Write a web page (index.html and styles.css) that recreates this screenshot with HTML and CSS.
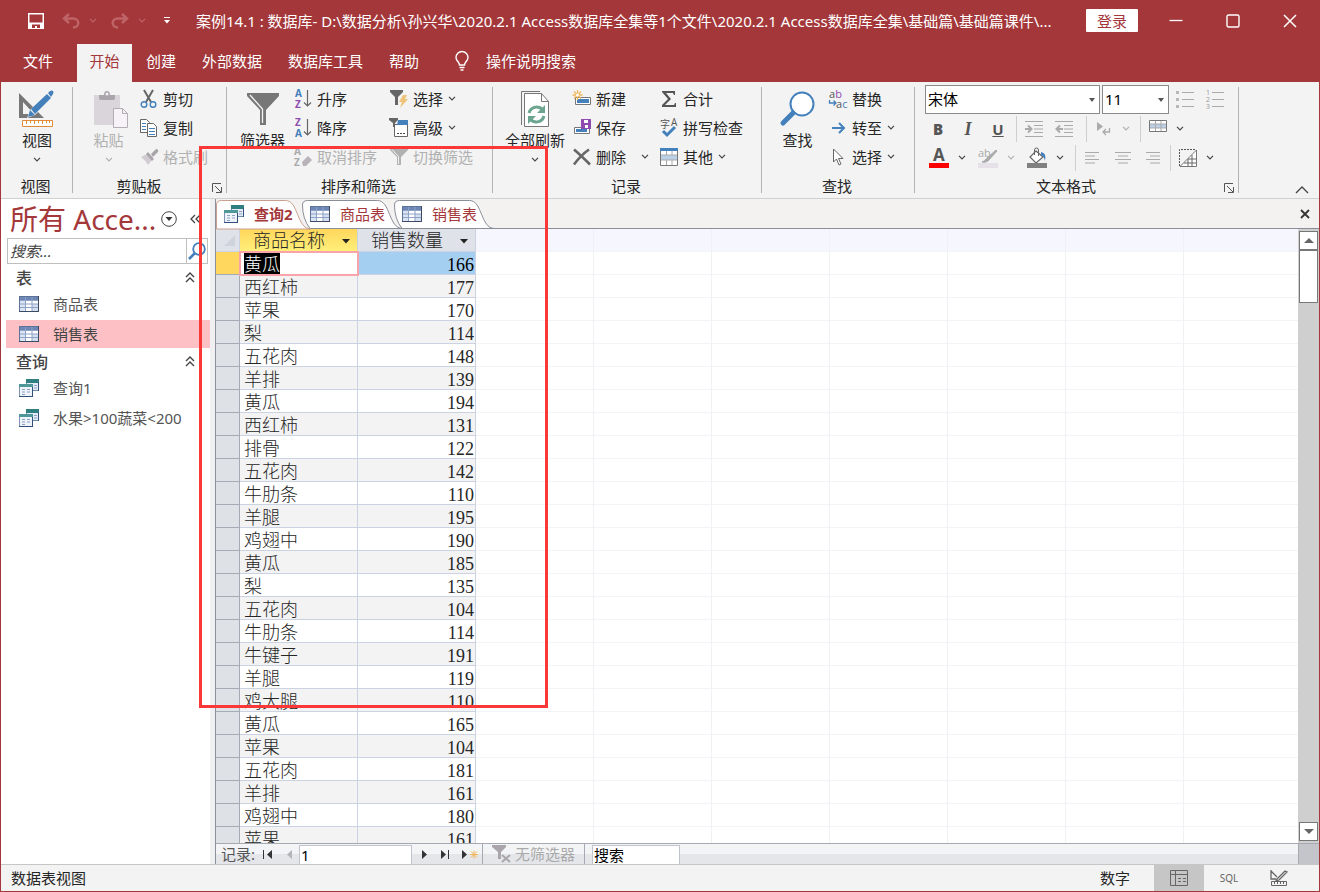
FILE: index.html
```html
<!DOCTYPE html>
<html lang="zh-CN">
<head>
    <meta charset="UTF-8">
    <meta name="viewport" content="width=device-width, initial-scale=1.0">
    <title>案例14.1 : 数据库</title>
    <link rel="stylesheet" href="styles.css">
</head>
<body>
    <!-- 共用图标 -->
    <svg class="defs" aria-hidden="true">
        <symbol id="i-down" viewBox="0 0 8 5"><path d="M1 .8l3 3 3-3" fill="none" stroke="currentColor" stroke-width="1.2"/></symbol>
        <symbol id="i-table" viewBox="0 0 20 16">
            <rect x=".5" y=".5" width="19" height="15" fill="#fff" stroke="#5c7299"/>
            <path d="M1 1h18v3H1z" fill="#6d86b5"/>
            <path d="M1 4h5v11H1z" fill="#dbe4f4"/>
            <path d="M13 8h6v7h-6z" fill="#d3def0"/>
            <path d="M6.500 1v14M13 1v14M1 4.500h18M1 8h18M1 11.500h18" stroke="#8ea2c6" fill="none"/>
            <path d="M0 15.500h20M19.500 0v16" stroke="#3d4a63"/>
        </symbol>
        <symbol id="i-query" viewBox="0 0 20 18">
            <rect x="7.500" y=".5" width="12" height="11" fill="#e3ecf6" stroke="#6f8fa6"/>
            <path d="M7 0h13v4H7z" fill="#2f7f80"/>
            <path d="M10 6.500h3M15 6.500h3M15 9h3" stroke="#8ea2c6"/>
            <rect x=".5" y="5.500" width="13" height="12" fill="#eef3fa" stroke="#7f95b5"/>
            <path d="M0 5h14v3H0z" fill="#4f9798"/>
            <path d="M3 10.500h3M8 10.500h3M3 13h3M8 13h3M3 15.500h3" stroke="#8ea2c6"/>
            <path d="M0 17.500h14M13.500 8v10M19.500 3v9" stroke="#33507c"/>
        </symbol>
        <symbol id="i-launch" viewBox="0 0 10 10"><path d="M.5 9V.5H9M3 3l6 6M9.500 4v5.500H4" fill="none" stroke="#555"/></symbol>
        <symbol id="i-up2" viewBox="0 0 10 11"><path d="M1 5l4-4 4 4M1 10l4-4 4 4" fill="none" stroke="#444" stroke-width="1.400"/></symbol>
        <symbol id="i-funnel" viewBox="0 0 18 17"><path d="M0 0h18v2l-7 7v8H7V9L0 2z" fill="currentColor"/><path d="M2 1.500l6.500 7V16" stroke="#f3f3f3" fill="none"/></symbol>
    </svg>

    <div class="window">
        <header class="titlebar">
            <div class="quick">
                <button aria-label="保存"><svg width="16" height="16" viewBox="0 0 16 16"><path d="M0 0h16v16H0z" fill="#fff"/><path d="M1.500 1.500h13v8h-13zM4 11.500h8v3.500H9v-2H7v2H4z" fill="#a4373a"/></svg></button>
                <button class="dim" aria-label="撤消"><svg width="18" height="16" viewBox="0 0 18 16"><path d="M7 1L2 5.500 7 10M2 5.500h9c7 0 7 9 0 9" fill="none" stroke="currentColor" stroke-width="2.500"/></svg><svg width="8" height="5"><use href="#i-down"/></svg></button>
                <button class="dim" aria-label="恢复"><svg width="18" height="16" viewBox="0 0 18 16"><path d="M11 1l5 4.500-5 4.500M16 5.500H7c-7 0-7 9 0 9" fill="none" stroke="currentColor" stroke-width="2.500"/></svg><svg width="8" height="5"><use href="#i-down"/></svg></button>
                <button class="custom" aria-label="自定义"><svg width="6" height="7" viewBox="0 0 6 7"><path d="M0 .5h6" stroke="#fff"/><path d="M0 3h6L3 6.500z" fill="#fff"/></svg></button>
            </div>
            <div class="title">案例14.1 : 数据库- D:\数据分析\孙兴华\2020.2.1 Access数据库全集等1个文件\2020.2.1 Access数据库全集\基础篇\基础篇课件\...</div>
            <button class="signin">登录</button>
            <div class="winbtns">
                <button aria-label="最小化"><svg width="14" height="14" viewBox="0 0 14 14"><path d="M.5 6.500h13" stroke="#fff" stroke-width="1.300"/></svg></button>
                <button aria-label="最大化"><svg width="14" height="14" viewBox="0 0 14 14"><rect x="1" y="1" width="12" height="12" rx="1.500" fill="none" stroke="#fff" stroke-width="1.400"/></svg></button>
                <button aria-label="关闭"><svg width="14" height="14" viewBox="0 0 14 14"><path d="M1 1l12 12M13 1L1 13" stroke="#fff" stroke-width="1.500"/></svg></button>
            </div>
        </header>

        <nav class="menu">
            <button class="file">文件</button>
            <button class="on">开始</button>
            <button>创建</button>
            <button>外部数据</button>
            <button>数据库工具</button>
            <button>帮助</button>
            <button class="tell"><svg width="14" height="20" viewBox="0 0 14 20"><path d="M4.500 14c0-3-3.500-4-3.500-7.500a6 6 0 0 1 12 0C13 10 9.500 11 9.500 14zM4.500 16.500h5M5.500 19h3" fill="none" stroke="#fff" stroke-width="1.400"/></svg>操作说明搜索</button>
        </nav>

        <div class="ribbon">
            <section class="group g-view">
                <div class="group-body">
                    <button class="big">
                        <svg width="38" height="38" viewBox="0 0 38 38">
                            <path d="M1 3v25h25zM5 12l11 12H5z" fill="#777" fill-rule="evenodd"/>
                            <path d="M9 28l3-8 17-17 5 5-17 17z" fill="#f3f3f3"/>
                            <path d="M10 27l2-7 5 5zM13 19L29 4l4 4-16 16zM30 3l2-2q2-1 3 0t0 3l-2 3z" fill="#4380bc"/>
                            <path d="M4.500 30.500h30v6h-30z" fill="#fff" stroke="#e08a3c"/>
                            <path d="M8.500 31v3M12.500 31v2M16.500 31v3M20.500 31v2M24.500 31v3M28.500 31v2M31.500 31v2" stroke="#e08a3c"/>
                        </svg>
                        <span>视图</span>
                        <svg class="chev" width="8" height="5"><use href="#i-down"/></svg>
                    </button>
                </div>
                <div class="group-name">视图</div>
            </section>

            <section class="group g-clip">
                <div class="group-body">
                    <button class="big off">
                        <svg width="32" height="38" viewBox="0 0 32 38">
                            <path d="M1 5h26v30H1z" fill="#dad5da"/>
                            <path d="M6 8V5h5q0-4 3-4t3 4h5v3q0 2-2 2H8q-2 0-2-2z" fill="#aaa5aa"/>
                            <circle cx="14" cy="4" r="1.500" fill="#f3f3f3"/>
                            <path d="M20.500 18.500h9l5 5v14h-14z" fill="#f6f2f6" stroke="#b2adb2"/>
                            <path d="M29.500 18.500v5h5" fill="none" stroke="#b2adb2"/>
                        </svg>
                        <span>粘贴</span>
                        <svg class="chev" width="8" height="5"><use href="#i-down"/></svg>
                    </button>
                    <div class="cmds">
                        <button class="cmd"><svg width="18" height="18" viewBox="0 0 18 18"><path d="M4 0l7 12M13 0L6 12" stroke="#666" stroke-width="2"/><g fill="none" stroke="#4380bc" stroke-width="1.400"><circle cx="4" cy="14.500" r="2.800"/><circle cx="13" cy="14.500" r="2.800"/></g></svg>剪切</button>
                        <button class="cmd"><svg width="18" height="18" viewBox="0 0 18 18"><g fill="#fff" stroke="#666"><path d="M.5.500h6l3 3v10h-9z"/><path d="M7.500 4.500h6l3 3v10h-9z"/></g><path d="M2 4.500h4M2 7.500h4M2 10.500h4M9 9.500h6M9 12.500h6M9 15.500h6" stroke="#4380bc"/></svg>复制</button>
                        <button class="cmd off"><svg width="18" height="18" viewBox="0 0 18 18"><path d="M1 9l6-3 5 6-4 5q-3-5-7-8z" fill="#d2ccd2"/><path d="M8 4l6 7-2 2-6-7zM11 6l4-4q2-2 3 0t-1 3l-4 4z" fill="#aaa5aa"/></svg>格式刷</button>
                    </div>
                </div>
                <div class="group-name launch">剪贴板<button aria-label="剪贴板选项"><svg width="10" height="10"><use href="#i-launch"/></svg></button></div>
            </section>

            <section class="group g-sort">
                <div class="group-body">
                    <button class="big">
                        <svg width="34" height="38" viewBox="0 0 34 38"><path d="M1 3h32v3L20 20v15h-6V20L1 6z" fill="#777"/><path d="M4 5l12.500 14v14" fill="none" stroke="#f3f3f3" stroke-width="1.300"/></svg>
                        <span>筛选器</span>
                    </button>
                    <div class="cmds sort-cmds">
                        <button class="cmd"><svg class="az" width="18" height="20" viewBox="0 0 18 20"><text x="1" y="8" fill="#4380bc">A</text><text x="1" y="19" fill="#8e4bb0">Z</text><path d="M13.500 1v16M10 13.500l3.500 3.500 3.500-3.500" fill="none" stroke="#666" stroke-width="1.200"/></svg>升序</button>
                        <button class="cmd"><svg class="az" width="18" height="20" viewBox="0 0 18 20"><text x="1" y="8" fill="#8e4bb0">Z</text><text x="1" y="19" fill="#4380bc">A</text><path d="M13.500 1v16M10 13.500l3.500 3.500 3.500-3.500" fill="none" stroke="#666" stroke-width="1.200"/></svg>降序</button>
                        <button class="cmd off"><svg class="az" width="18" height="20" viewBox="0 0 18 20"><text x="0" y="8" fill="#aaa">A</text><text x="0" y="19" fill="#aaa">Z</text><path d="M8 15l6-6 4 4-6 6H9z" fill="#b8b3b8"/></svg>取消排序</button>
                    </div>
                    <div class="cmds">
                        <button class="cmd"><svg width="18" height="18" viewBox="0 0 18 18"><path d="M0 0h13v2L8 7v8H5V7L0 2z" fill="#666"/><path d="M13 5h4l-2 4h3l-8 9 2-6H9z" fill="#efc37a"/></svg>选择<svg class="chev" width="8" height="5"><use href="#i-down"/></svg></button>
                        <button class="cmd"><svg width="18" height="18" viewBox="0 0 18 18"><path d="M4.500 5.500h13v12h-13z" fill="#fff" stroke="#666"/><path d="M8 1h10v5H7z" fill="#4380bc"/><path d="M-1-1h9v2L5 4v4H3V4L-1 1z" fill="#666"/><path d="M7 14h2v1H7zM10 14h2v1h-2zM13 14h2v1h-2z" fill="#444"/></svg>高级<svg class="chev" width="8" height="5"><use href="#i-down"/></svg></button>
                        <button class="cmd off"><svg width="18" height="17"><use href="#i-funnel"/></svg>切换筛选</button>
                    </div>
                </div>
                <div class="group-name">排序和筛选</div>
            </section>

            <section class="group g-records">
                <div class="group-body">
                    <button class="big">
                        <svg width="30" height="38" viewBox="0 0 30 38">
                            <path d="M1.500 35V1.500H20" fill="none" stroke="#777"/>
                            <path d="M4.500 3.500h17l7 8v25h-24z" fill="#fff" stroke="#777"/>
                            <path d="M21.500 3.500v8h7" fill="none" stroke="#777"/>
                            <path d="M9 23a8 8 0 0 1 13-4M24 26a8 8 0 0 1-13 4" fill="none" stroke="#6ba58f" stroke-width="3"/>
                            <path d="M25 15v8h-8zM8 34v-8h8z" fill="#6ba58f"/>
                        </svg>
                        <span>全部刷新</span>
                        <svg class="chev" width="8" height="5"><use href="#i-down"/></svg>
                    </button>
                    <div class="cmds record-cmds">
                        <button class="cmd"><svg width="18" height="18" viewBox="0 0 18 18"><path d="M2.500 7.500h15v7h-15z" fill="#fff" stroke="#777"/><path d="M4 9h12v4H4z" fill="#4380bc"/><path d="M4.500 0v10M-.5 5h10M1 1.500l7 7M8 1.500l-7 7" stroke="#efb65c" stroke-width="1.300"/><circle cx="4.500" cy="5" r="1.500" fill="#fff"/></svg>新建</button>
                        <button class="cmd"><svg width="18" height="18" viewBox="0 0 18 18"><path d="M1.500 8.500h15v6h-15z" fill="#fff" stroke="#777"/><path d="M3 10h11v3H3z" fill="#4380bc"/><path d="M8 0h10v10H8z" fill="#8e4bb0"/><path d="M11 1h4v3h-4zM12 6h3v3h-3z" fill="#fff"/></svg>保存</button>
                        <button class="cmd"><svg width="18" height="18" viewBox="0 0 18 18"><path d="M1 1.500q6 5 16 15M16 1.500Q8 7 1 16.500" fill="none" stroke="#666" stroke-width="2.600"/></svg>删除<svg class="chev push" width="8" height="5"><use href="#i-down"/></svg></button>
                    </div>
                    <div class="cmds">
                        <button class="cmd"><svg width="18" height="18" viewBox="0 0 18 18"><path d="M2 1h13v4h-1l-1-2H6l5 6-6 6h9l1-2h1v4H2v-2l6-6-6-7z" fill="#555"/></svg>合计</button>
                        <button class="cmd"><svg class="spell" width="18" height="20" viewBox="0 0 18 20"><text x="0" y="10" fill="#555">字</text><text x="11" y="8" fill="#555">A</text><path d="M3 13l4 4 8-8" fill="none" stroke="#4380bc" stroke-width="3"/></svg>拼写检查</button>
                        <button class="cmd"><svg width="18" height="18" viewBox="0 0 18 18"><path d="M.5 1.500h17v16H.5z" fill="#fff" stroke="#777"/><path d="M0 0h18v3H0z" fill="#4380bc"/><path d="M1 7h16v5H1z" fill="#bcd0e8"/><path d="M6.500 3v4M12 3v4M6.500 12v5M12 12v5M1 7h16M1 12h16" stroke="#aaa"/></svg>其他<svg class="chev" width="8" height="5"><use href="#i-down"/></svg></button>
                    </div>
                </div>
                <div class="group-name">记录</div>
            </section>

            <section class="group g-find">
                <div class="group-body">
                    <button class="big">
                        <svg width="36" height="38" viewBox="0 0 36 38"><circle cx="22" cy="14" r="11.500" fill="#fff" stroke="#4380bc" stroke-width="2"/><path d="M13 23L3 33" stroke="#4380bc" stroke-width="5" stroke-linecap="round"/></svg>
                        <span>查找</span>
                    </button>
                    <div class="cmds">
                        <button class="cmd"><svg class="abac" width="18" height="20" viewBox="0 0 18 20"><text x="0" y="9" fill="#555">a<tspan fill="#8e4bb0">b</tspan></text><text x="7" y="19" fill="#555">a<tspan fill="#4380bc">c</tspan></text><path d="M.5 11v3h6M4.500 11.500L7 14l-2.500 2.500" fill="none" stroke="#4380bc" stroke-width="1.300"/></svg>替换</button>
                        <button class="cmd"><svg width="18" height="14" viewBox="0 0 18 14"><path d="M3 7h12M10 2l5 5-5 5" fill="none" stroke="#4380bc" stroke-width="2"/></svg>转至<svg class="chev" width="8" height="5"><use href="#i-down"/></svg></button>
                        <button class="cmd"><svg width="18" height="18" viewBox="0 0 18 18"><path d="M4.500 1v13l3-3 2.500 6 2-1-2.500-5.500H14z" fill="#fff" stroke="#666"/></svg>选择<svg class="chev" width="8" height="5"><use href="#i-down"/></svg></button>
                    </div>
                </div>
                <div class="group-name">查找</div>
            </section>

            <section class="group g-text">
                <div class="group-body text-body">
                    <div class="fmt">
                        <label class="combo font"><select aria-label="字体"><option>宋体</option></select></label>
                        <label class="combo size"><select aria-label="字号"><option>11</option></select></label>
                        <button aria-label="项目符号"><svg width="18" height="18" viewBox="0 0 18 18"><path d="M6 1.500h12M6 8.500h12M6 15.500h12" stroke="#aaa"/><path d="M0 0h3v3H0zM0 7h3v3H0zM0 14h3v3H0z" fill="#b8b8b8"/></svg></button>
                        <button class="numbers" aria-label="编号"><svg width="18" height="20" viewBox="0 0 18 20"><path d="M6 2.500h12M6 9.500h12M6 16.500h12" stroke="#aaa"/><text x="0" y="5">1</text><text x="0" y="12">2</text><text x="0" y="19">3</text></svg></button>
                    </div>
                    <div class="fmt row2">
                        <button class="letter"><b>B</b></button>
                        <button class="letter"><i>I</i></button>
                        <button class="letter"><u>U</u></button>
                        <span class="bar"></span>
                        <button aria-label="增加缩进"><svg width="18" height="16" viewBox="0 0 18 16"><path d="M0 .5h18M9 4.500h9M9 8h9M9 11.500h9M0 15.500h18" stroke="#aaa"/><path d="M0 8h6M3 4.500L6.500 8 3 11.500" fill="none" stroke="#aaa" stroke-width="2"/></svg></button>
                        <button aria-label="减少缩进"><svg width="18" height="16" viewBox="0 0 18 16"><path d="M0 .5h18M9 4.500h9M9 8h9M9 11.500h9M0 15.500h18" stroke="#aaa"/><path d="M1 8h7M5 4.500L1.500 8 5 11.500" fill="none" stroke="#aaa" stroke-width="2"/></svg></button>
                        <span class="bar"></span>
                        <button class="drop off" aria-label="文字方向"><svg width="18" height="14" viewBox="0 0 18 14"><path d="M2 0l6 4.500L2 9z" fill="#aaa"/><path d="M14.500 6v4H8M11 7l-3 3 3 3" fill="none" stroke="#aaa" stroke-width="1.300"/></svg><svg class="chev" width="8" height="5"><use href="#i-down"/></svg></button>
                        <span class="bar"></span>
                        <button class="drop" aria-label="网格线"><svg width="18" height="18" viewBox="0 0 18 18"><path d="M.5.500h17v11H.5z" fill="#fff" stroke="#777"/><path d="M1 4h16v4H1z" fill="#bcd0e8"/><path d="M6.500 1v10M12 1v10M1 4h16M1 8h16" stroke="#aaa"/></svg><svg class="chev" width="8" height="5"><use href="#i-down"/></svg></button>
                    </div>
                    <div class="fmt row3">
                        <button class="drop" aria-label="字体颜色"><svg class="fontcolor" width="20" height="20" viewBox="0 0 20 20"><text x="4" y="13">A</text><path d="M0 15h20v5H0z" fill="red"/></svg><svg class="chev" width="8" height="5"><use href="#i-down"/></svg></button>
                        <button class="drop off" aria-label="突出显示"><svg class="abac" width="20" height="20" viewBox="0 0 20 20"><text x="0" y="9" fill="#aaa">ab</text><path d="M0 15h20v5H0z" fill="#e6e1e8"/><path d="M18 2l1 1-9 10q-3 2-6 1 3-1 4-3z" fill="#aaa" stroke="#aaa"/></svg><svg class="chev" width="8" height="5"><use href="#i-down"/></svg></button>
                        <button class="drop" aria-label="背景色"><svg width="20" height="20" viewBox="0 0 20 20"><path d="M9 3l7 6-7 6-6-6z" fill="#fff" stroke="#666" stroke-width="1.200"/><path d="M7.500 7V2q0-2 2-2t2 2v6" fill="none" stroke="#666"/><path d="M14 4q6 1 4 9-1-5-4-6z" fill="#4380bc"/><path d="M0 15h20v5H0z" fill="#808080"/></svg><svg class="chev" width="8" height="5"><use href="#i-down"/></svg></button>
                        <span class="bar"></span>
                        <button aria-label="左对齐"><svg width="18" height="12" viewBox="0 0 18 12"><path d="M1 .5h14M1 4h10M1 7.500h14M1 11h10" stroke="#aaa"/></svg></button>
                        <button aria-label="居中"><svg width="18" height="12" viewBox="0 0 18 12"><path d="M1 .5h16M4 4h10M1 7.500h16M4 11h10" stroke="#aaa"/></svg></button>
                        <button class="right" aria-label="右对齐"><svg width="18" height="12" viewBox="0 0 18 12"><path d="M2 .5h14M6 4h10M2 7.500h14M6 11h10" stroke="#aaa"/></svg></button>
                        <span class="bar"></span>
                        <button class="drop" aria-label="可选行颜色"><svg width="18" height="18" viewBox="0 0 18 18"><path d="M.5 17V.5H17" fill="none" stroke="#555" stroke-dasharray="2 1"/><path d="M17.500 1v16.500H1z" fill="#fff" stroke="#777"/><path d="M13 6v11M9 10v7M5 14h12M9 10h8" fill="none" stroke="#666"/></svg><svg class="chev" width="8" height="5"><use href="#i-down"/></svg></button>
                    </div>
                </div>
                <div class="group-name launch">文本格式<button aria-label="文本格式选项"><svg width="10" height="10"><use href="#i-launch"/></svg></button></div>
            </section>
            <button class="collapse" aria-label="折叠功能区"><svg width="14" height="8" viewBox="0 0 14 8"><path d="M1 7l6-6 6 6" fill="none" stroke="#444" stroke-width="1.300"/></svg></button>
        </div>

        <div class="main">
            <aside class="nav">
                <div class="nav-head">
                    <h1>所有 Acce...</h1>
                    <button aria-label="筛选对象"><svg width="16" height="16" viewBox="0 0 16 16"><circle cx="8" cy="8" r="7.300" fill="none" stroke="#444"/><path d="M4.500 6h7L8 10z" fill="#333"/></svg></button>
                    <button class="fold" aria-label="收起"><svg width="11" height="10" viewBox="0 0 11 10"><path d="M5 1L1 5l4 4M10 1L6 5l4 4" fill="none" stroke="#444" stroke-width="1.300"/></svg></button>
                </div>
                <div class="nav-search">
                    <input type="text" placeholder="搜索..." aria-label="搜索对象">
                    <button aria-label="搜索"><svg width="18" height="18" viewBox="0 0 18 18"><circle cx="11" cy="7" r="5.800" fill="#fff" stroke="#4380bc" stroke-width="1.800"/><path d="M7 11l-6 6" stroke="#4380bc" stroke-width="2.600"/></svg></button>
                </div>
                <h2>表<svg width="10" height="11"><use href="#i-up2"/></svg></h2>
                <a href="#"><svg width="20" height="16"><use href="#i-table"/></svg>商品表</a>
                <a href="#" class="sel"><svg width="20" height="16"><use href="#i-table"/></svg>销售表</a>
                <h2>查询<svg width="10" height="11"><use href="#i-up2"/></svg></h2>
                <a href="#"><svg width="20" height="18"><use href="#i-query"/></svg>查询1</a>
                <a href="#"><svg width="20" height="18"><use href="#i-query"/></svg>水果&gt;100蔬菜&lt;200</a>
            </aside>

            <div class="doc">
                <div class="doctabs">
                    <button class="doctab t1">
                        <svg class="shape" width="98" height="30" viewBox="0 0 98 30"><path d="M.5 30V6q0-4.500 5-4.500h64c13 0 11 28 25 28.500z"/></svg>
                        <svg width="20" height="18"><use href="#i-query"/></svg><span>查询2</span>
                    </button>
                    <button class="doctab t2">
                        <svg class="shape" width="101" height="30" viewBox="0 0 101 30"><path d="M8 29.500Q.5 20 .5 6q0-4.500 5-4.500h70c13 0 11 28 25 28z"/></svg>
                        <svg width="20" height="18"><use href="#i-table"/></svg><span>商品表</span>
                    </button>
                    <button class="doctab t3">
                        <svg class="shape" width="101" height="30" viewBox="0 0 101 30"><path d="M8 29.500Q.5 20 .5 6q0-4.500 5-4.500h70c13 0 11 28 25 28z"/></svg>
                        <svg width="20" height="18"><use href="#i-table"/></svg><span>销售表</span>
                    </button>
                    <button class="docclose" aria-label="关闭"><svg width="10" height="10" viewBox="0 0 10 10"><path d="M1 1l8 8M9 1L1 9" stroke="#333" stroke-width="1.800"/></svg></button>
                </div>

                <div class="sheet">
                    <div class="cells">
                        <table>
                            <thead>
                                <tr>
                                    <th class="pick"><svg width="11" height="11" viewBox="0 0 11 11"><path d="M11 0v11H0z" fill="#cfd3dc"/></svg></th>
                                    <th class="hot"><div>商品名称<svg width="8" height="5" viewBox="0 0 8 5"><path d="M0 0h8L4 4.500z" fill="#222"/></svg></div></th>
                                    <th><div>销售数量<svg width="8" height="5" viewBox="0 0 8 5"><path d="M0 0h8L4 4.500z" fill="#222"/></svg></div></th>
                                </tr>
                            </thead>
                            <tbody>
                                <tr class="current"><th></th><td><mark>黄瓜</mark></td><td>166</td></tr>
                                <tr><th></th><td>西红柿</td><td>177</td></tr>
                                <tr><th></th><td>苹果</td><td>170</td></tr>
                                <tr><th></th><td>梨</td><td>114</td></tr>
                                <tr><th></th><td>五花肉</td><td>148</td></tr>
                                <tr><th></th><td>羊排</td><td>139</td></tr>
                                <tr><th></th><td>黄瓜</td><td>194</td></tr>
                                <tr><th></th><td>西红柿</td><td>131</td></tr>
                                <tr><th></th><td>排骨</td><td>122</td></tr>
                                <tr><th></th><td>五花肉</td><td>142</td></tr>
                                <tr><th></th><td>牛肋条</td><td>110</td></tr>
                                <tr><th></th><td>羊腿</td><td>195</td></tr>
                                <tr><th></th><td>鸡翅中</td><td>190</td></tr>
                                <tr><th></th><td>黄瓜</td><td>185</td></tr>
                                <tr><th></th><td>梨</td><td>135</td></tr>
                                <tr><th></th><td>五花肉</td><td>104</td></tr>
                                <tr><th></th><td>牛肋条</td><td>114</td></tr>
                                <tr><th></th><td>牛键子</td><td>191</td></tr>
                                <tr><th></th><td>羊腿</td><td>119</td></tr>
                                <tr><th></th><td>鸡大腿</td><td>110</td></tr>
                                <tr><th></th><td>黄瓜</td><td>165</td></tr>
                                <tr><th></th><td>苹果</td><td>104</td></tr>
                                <tr><th></th><td>五花肉</td><td>181</td></tr>
                                <tr><th></th><td>羊排</td><td>161</td></tr>
                                <tr><th></th><td>鸡翅中</td><td>180</td></tr>
                                <tr><th></th><td>苹果</td><td>161</td></tr>
                            </tbody>
                        </table>
                    </div>
                    <div class="vscroll">
                        <button aria-label="向上"><svg width="10" height="5" viewBox="0 0 10 5"><path d="M0 5l5-5 5 5z" fill="#666"/></svg></button>
                        <div class="thumb"></div>
                        <button class="down" aria-label="向下"><svg width="10" height="5" viewBox="0 0 10 5"><path d="M0 0l5 5 5-5z" fill="#666"/></svg></button>
                    </div>
                </div>

                <div class="recnav">
                    <label for="recno">记录:</label>
                    <button aria-label="第一条"><svg width="10" height="9" viewBox="0 0 10 9"><path d="M.5 0v9" stroke="#333"/><path d="M9 0v9L4 4.500z" fill="#333"/></svg></button>
                    <button aria-label="上一条"><svg width="10" height="9" viewBox="0 0 10 9"><path d="M9 0v9L4 4.500z" fill="#b5b5b8"/></svg></button>
                    <input id="recno" type="text" value="1">
                    <button class="next" aria-label="下一条"><svg width="10" height="9" viewBox="0 0 10 9"><path d="M2 0v9l5-4.500z" fill="#333"/></svg></button>
                    <button aria-label="最后一条"><svg width="10" height="9" viewBox="0 0 10 9"><path d="M1 0v9l5-4.500z" fill="#333"/><path d="M8.500 0v9" stroke="#333"/></svg></button>
                    <button class="new" aria-label="新记录"><svg width="16" height="9" viewBox="0 0 16 9"><path d="M0 0v9l5-4.500z" fill="#333"/><path d="M12 .5v8M8 4.500h8M9 1.500l6 6M15 1.500l-6 6" stroke="#efb65c"/></svg></button>
                    <button class="nofilter"><svg width="20" height="18" viewBox="0 0 20 18"><path d="M0 0h14v2L9 7v7H6V7L0 2z" fill="#aaa5aa"/><path d="M10 10l8 7M18 10l-8 7" stroke="#aaa5aa" stroke-width="2"/></svg>无筛选器</button>
                    <input class="find" type="text" value="搜索" aria-label="搜索">
                    <div class="hscroll"></div>
                    <div class="corner"></div>
                </div>
            </div>
        </div>

        <footer class="status">
            <span class="mode">数据表视图</span>
            <span class="num">数字</span>
            <button class="on" aria-label="数据表视图"><svg width="18" height="16" viewBox="0 0 18 16"><path d="M.5.500h17v15H.5zM.5 4.500h17M5.500.500v15M8 8.500h3M13 8.500h3M8 11.500h3M13 11.500h3" fill="none" stroke="#666"/></svg></button>
            <button class="sql">SQL</button>
            <button aria-label="设计视图"><svg width="18" height="17" viewBox="0 0 18 17"><path d="M1 0v9h5M1 1l6 6M7 9l8-8 2 1-8 8-3 1z" fill="none" stroke="#666" stroke-width="1.300"/><path d="M1.500 11.500h15v4h-15zM4.500 12v2M7.500 12v2M10.500 12v2M13.500 12v2" fill="none" stroke="#666"/></svg></button>
        </footer>

        <!-- 红色标注框 -->
        <div class="callout"></div>
    </div>
</body>
</html>
```

FILE: styles.css
```css
* {
    box-sizing: border-box;
}
body {
    margin: 0;
    font-family: "Noto Sans", "Noto Sans CJK SC", sans-serif;
    font-size: 15px;
    line-height: 20px;
    color: #262626;
}
button {
    display: flex;
    align-items: center;
    margin: 0;
    padding: 0;
    border: 0;
    background: none;
    font: inherit;
    color: inherit;
    white-space: nowrap;
    flex-shrink: 0;
}
input,
select {
    font: inherit;
    color: #000;
    border-radius: 0;
}
svg {
    display: block;
    flex-shrink: 0;
    overflow: visible;
}
.defs {
    position: absolute;
    width: 0;
    height: 0;
}
.window {
    position: relative;
    display: flex;
    flex-direction: column;
    height: 100vh;
    border: 1px solid #a4373a;
    border-top: 0;
    background: #f3f3f3;
    overflow: hidden;
}

/* 标题栏 */
.titlebar {
    display: flex;
    align-items: center;
    height: 41px;
    flex-shrink: 0;
    background: #a4373a;
    color: #fff;
}
.quick {
    display: flex;
    width: 195px;
    padding-left: 27px;
    gap: 14px;
    flex-shrink: 0;
}
.quick button {
    gap: 9px;
}
.quick .dim {
    color: #be6467;
}
.quick .dim:nth-child(2) {
    margin-left: 4px;
}
.quick .custom {
    margin-left: 4px;
}
.title {
    flex: 1;
    min-width: 0;
    white-space: nowrap;
    overflow: hidden;
}
.signin {
    width: 52px;
    height: 23px;
    margin: 0 9px 0 16px;
    justify-content: center;
    background: #fff;
    color: #a4373a;
    border-radius: 1px;
}
.winbtns {
    display: flex;
    margin-right: 1px;
}
.winbtns button {
    width: 57px;
    height: 32px;
    justify-content: center;
}

/* 菜单 */
.menu {
    display: flex;
    height: 41px;
    flex-shrink: 0;
    padding-top: 3px;
    background: #a4373a;
    color: #fff;
}
.menu button {
    padding: 0 13px 4px;
}
.menu .file {
    width: 76px;
    padding-left: 22px;
}
.menu .on {
    width: 55px;
    padding: 0 0 4px;
    margin-right: 1px;
    justify-content: center;
    background: #f3f3f3;
    color: #a4373a;
}
.menu .tell {
    padding-left: 23px;
    gap: 17px;
}

/* 功能区 */
.ribbon {
    display: flex;
    position: relative;
    height: 117px;
    flex-shrink: 0;
    padding-top: 2px;
    border-bottom: 1px solid #d2d0ce;
}
.group {
    display: flex;
    flex-direction: column;
    flex-shrink: 0;
    background: linear-gradient(#b4b4b4, #b4b4b4) right 3px / 1px 106px no-repeat;
}
.group-body {
    display: flex;
    height: 88px;
}
.group-name {
    position: relative;
    height: 26px;
    padding-right: 3px;
    line-height: 28px;
    text-align: center;
}
.group-name.launch {
    padding-right: 22px;
}
.group-name button {
    position: absolute;
    right: 5px;
    bottom: 5px;
}
.g-view {
    width: 72px;
}
.g-clip {
    width: 154px;
}
.g-sort {
    width: 266px;
}
.g-records {
    width: 269px;
}
.g-find {
    width: 153px;
}
.g-text {
    width: 324px;
}
.big {
    flex-direction: column;
    width: 67px;
    padding: 6px 0 0 4px;
}
.big span {
    line-height: 24px;
}
.big .chev {
    margin-top: 5px;
}
.g-view .big {
    width: 72px;
    padding-left: 0;
}
.g-records .big {
    width: 80px;
}
.cmds {
    display: flex;
    flex-direction: column;
}
.cmd {
    height: 29px;
    gap: 5px;
}
.cmd .push {
    margin-left: auto;
}
.chev {
    color: #444;
}
.off,
.off .chev {
    color: #b1b1b1;
}
.sort-cmds {
    width: 96px;
}
.record-cmds {
    width: 76px;
    margin-right: 11px;
}
.az {
    font: bold 10px/10px "Open Sans", sans-serif;
}
.spell {
    font: 10px/10px "Open Sans", "Noto Sans CJK SC", sans-serif;
}
.abac {
    font: 11px/11px "Open Sans", sans-serif;
}
.text-body {
    flex-direction: column;
    padding: 1px 0 0 10px;
}
.fmt {
    display: flex;
    align-items: center;
    height: 29px;
}
.combo {
    position: relative;
    height: 29px;
    margin-right: 2px;
}
.combo select {
    width: 100%;
    height: 100%;
    padding: 0 2px 1px;
    border: 1px solid #8a8a8a;
    background: #fff;
    appearance: none;
}
.combo::after {
    content: "";
    position: absolute;
    right: 5px;
    top: 13px;
    border: 3px solid transparent;
    border-top: 4px solid #555;
    border-bottom: 0;
    pointer-events: none;
}
.font {
    width: 175px;
}
.size {
    width: 67px;
    margin-right: 7px;
}
.numbers {
    margin-left: 12px;
    font: 7px "Open Sans", sans-serif;
    fill: #999;
}
.row2 button,
.row3 button {
    margin-right: 12px;
}
.row2 .letter {
    width: 26px;
    margin-right: 4px;
    justify-content: center;
    font-weight: bold;
    color: #555;
}
.row2 .drop {
    margin-right: 9px;
}
.row3 {
    padding-left: 4px;
}
.row3 .right {
    margin-right: 9px;
}
.letter i {
    font-family: "Liberation Serif", serif;
    font-size: 18px;
}
.bar {
    width: 1px;
    height: 26px;
    margin: 0 8px 0 1px;
    background: #cfcfcf;
}
.row3 .bar {
    margin-left: -1px;
}
.drop {
    gap: 9px;
}
.fontcolor {
    font: bold 17px "Open Sans", sans-serif;
    fill: #555;
}
.collapse {
    position: absolute;
    right: 10px;
    bottom: 4px;
}

/* 导航窗格 */
.main {
    display: flex;
    flex: 1;
    min-height: 0;
}
.nav {
    width: 214px;
    flex-shrink: 0;
    padding-left: 5px;
    background: #fff;
    border-right: 5px solid #f0f0f2;
}
.nav-head {
    display: flex;
    align-items: center;
    height: 39px;
    padding-left: 4px;
}
.nav h1 {
    width: 151px;
    margin: 0;
    font-size: 28px;
    line-height: 38px;
    font-weight: normal;
    color: #a4373a;
    white-space: nowrap;
}
.nav-head .fold {
    margin-left: 13px;
}
.nav-search {
    display: flex;
    width: 201px;
    height: 26px;
    margin: 0 0 2px 1px;
    border: 1px solid #bfbfbf;
}
.nav-search input {
    width: 179px;
    padding: 0 2px;
    border: 0;
    border-right: 1px solid #bfbfbf;
    font-style: italic;
}
.nav-search input::placeholder {
    color: #444;
}
.nav-search button {
    padding-left: 1px;
}
.nav h2 {
    display: flex;
    align-items: center;
    justify-content: space-between;
    height: 23px;
    margin: 0;
    padding: 0 15px 0 10px;
    font-size: 16px;
    font-weight: 500;
    color: #444;
}
.nav a {
    display: flex;
    align-items: center;
    height: 28px;
    margin: 1px 0 2px;
    padding-left: 13px;
    gap: 14px;
    color: #555;
    text-decoration: none;
}
.nav .sel {
    background: #fdc1c5;
    color: #444;
}

/* 文档区 */
.doc {
    display: flex;
    flex-direction: column;
    flex: 1;
    min-width: 0;
    border-left: 1px solid #8c919b;
}
.doctabs {
    display: flex;
    height: 30px;
    flex-shrink: 0;
    border-bottom: 1px solid #898e98;
    background: #f3f2f1;
    color: #a4373a;
}
.doctab {
    position: relative;
    height: 30px;
    padding-left: 8px;
    gap: 10px;
}
.doctab > * {
    position: relative;
}
.doctab .shape {
    position: absolute;
    left: 0;
    top: 0;
    fill: #fff;
    stroke: #898e98;
}
.t1 {
    z-index: 3;
    width: 86px;
    font-weight: bold;
}
.t1 .shape {
    stroke: #c9a08f;
}
.t2 {
    z-index: 2;
    width: 92px;
}
.t3 {
    z-index: 1;
    width: 101px;
}
.docclose {
    margin-left: auto;
    margin-right: 9px;
}
.sheet {
    display: flex;
    flex: 1;
    min-height: 0;
}
.cells {
    flex: 1;
    min-width: 0;
    overflow: hidden;
    background:
        repeating-linear-gradient(90deg, transparent 0 117px, #f0f1f5 117px 118px) 24px 0 no-repeat,
        repeating-linear-gradient(transparent 0 22px, #f3f4f7 22px 23px),
        linear-gradient(#f6f7fe, #f6f7fe) 0 0 / 100% 23px no-repeat,
        #fff;
}
table {
    width: 260px;
    table-layout: fixed;
    border-collapse: separate;
    border-spacing: 0;
    font: 300 18px/18px "Liberation Serif", "Noto Sans CJK SC", serif;
}
th,
td {
    height: 23px;
    padding: 4px 0 0 4px;
    border-right: 1px solid #cbd3e3;
    border-bottom: 1px solid #cbd3e3;
    white-space: nowrap;
    font-weight: 300;
}
td:last-child {
    padding: 4px 1px 0 0;
    text-align: right;
}
tbody th {
    border-color: #a5aab4;
    background: #dee1e6;
}
tbody tr {
    background: #fff;
}
tbody tr:nth-child(even) {
    background: #f3f3f3;
}
thead th {
    padding-top: 0;
    background: #dfe2e8;
}
thead th div {
    display: flex;
    align-items: center;
    justify-content: space-between;
    height: 22px;
    padding: 2px 7px 0 9px;
}
thead .pick {
    width: 24px;
    padding-left: 8px;
}
thead .hot {
    background: linear-gradient(#ffd65c, #ffef7a);
}
.current th {
    background: #ffd75e;
}
.current td {
    color: #000;
    background: #a5cff1;
}
.current td:nth-child(2) {
    padding-top: 1px;
    background: #fff;
    outline: 2px solid #f9a3ab;
    outline-offset: -1px;
}
mark {
    display: block;
    width: fit-content;
    height: 21px;
    line-height: 24px;
    background: #000;
    color: #fff;
}
.vscroll {
    display: flex;
    flex-direction: column;
    width: 21px;
    flex-shrink: 0;
    padding: 2px 1px;
    background: #cfcfcf;
}
.vscroll button {
    height: 19px;
    justify-content: center;
    border: 1px solid #777;
    background: #fff;
}
.thumb {
    height: 53px;
    border: 1px solid #777;
    background: #fff;
}
.vscroll .down {
    margin-top: auto;
}

/* 记录导航 */
.recnav {
    display: flex;
    align-items: center;
    height: 21px;
    flex-shrink: 0;
    border-top: 1px solid #a5aab0;
    background: linear-gradient(#f3f4f6 50%, #e4e6ea 50%);
    color: #555;
}
.recnav label {
    width: 47px;
    padding-left: 5px;
}
.recnav > button {
    margin-right: 10px;
}
.recnav input {
    width: 113px;
    height: 19px;
    margin-left: -4px;
    padding: 0 1px;
    border: 1px solid #c0c4cc;
    border-bottom: 0;
    background: #fff;
}
.recnav .next {
    margin-left: 8px;
}
.recnav .new {
    margin: 0 4px 0 2px;
}
.recnav .nofilter {
    align-self: stretch;
    width: 103px;
    margin-right: 7px;
    padding-left: 9px;
    gap: 3px;
    border-left: 1px solid #a5aab4;
    border-right: 1px solid #a5aab4;
    color: #aaa;
}
.recnav .find {
    width: 88px;
    margin-left: 0;
}
.hscroll {
    flex: 1;
}
.corner {
    width: 21px;
    height: 20px;
    background: #c3c5cb;
    border-left: 1px solid #a5aab0;
}

/* 状态栏 */
.status {
    display: flex;
    align-items: center;
    height: 27px;
    flex-shrink: 0;
    border-top: 1px solid #c6c6c6;
    padding-left: 10px;
}
.status .num {
    margin-left: auto;
    margin-right: 24px;
}
.status button {
    width: 50px;
    height: 26px;
    justify-content: center;
}
.status .on {
    background: #c6c6c6;
}
.status .sql {
    font-size: 10px;
    color: #666;
}
.status button:last-child {
    margin-right: 15px;
}

.callout {
    position: absolute;
    left: 198px;
    top: 146px;
    width: 349px;
    height: 562px;
    border: 3px solid #fb3838;
    pointer-events: none;
    z-index: 5;
}
```
